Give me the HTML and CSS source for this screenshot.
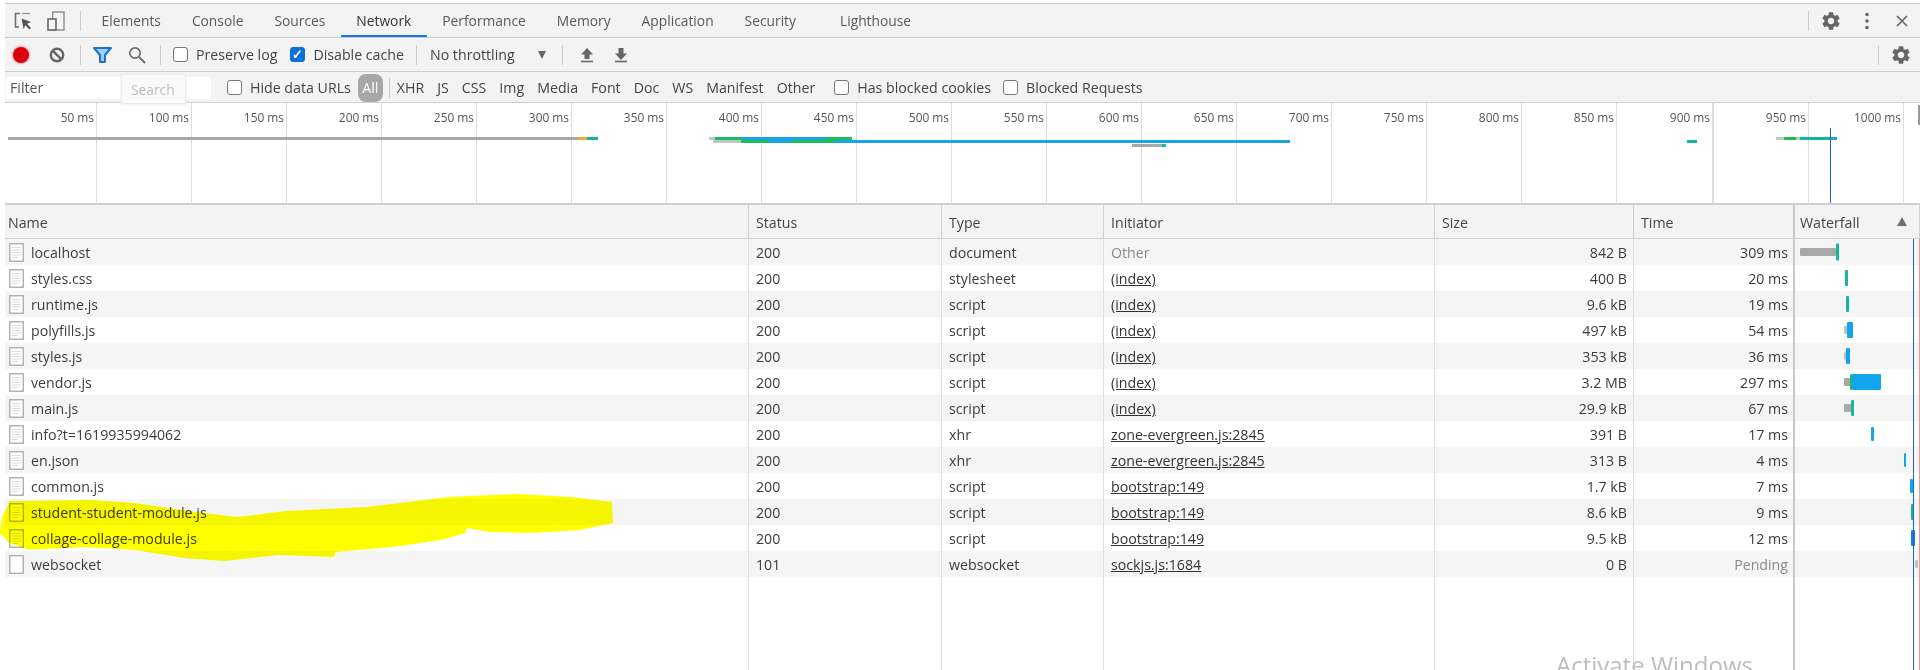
FILE: index.html
```html
<!DOCTYPE html>
<html lang="en">
<head>
<meta charset="utf-8">
<title>DevTools Network</title>
<link rel="stylesheet" href="styles.css">
</head>
<body>
<svg class="defs" width="0" height="0" aria-hidden="true">
  <symbol id="gear" viewBox="0 0 24 24"><path d="M19.14 12.94c.04-.3.06-.61.06-.94 0-.32-.02-.64-.07-.94l2.03-1.58a.49.49 0 0 0 .12-.61l-1.92-3.32a.488.488 0 0 0-.59-.22l-2.39.96c-.5-.38-1.03-.7-1.62-.94l-.36-2.54a.484.484 0 0 0-.48-.41h-3.84c-.24 0-.43.17-.47.41l-.36 2.54c-.59.24-1.13.57-1.62.94l-2.39-.96c-.22-.08-.47 0-.59.22L2.74 8.87c-.12.21-.08.47.12.61l2.03 1.58c-.05.3-.09.63-.09.94s.02.64.07.94l-2.03 1.58a.49.49 0 0 0-.12.61l1.92 3.32c.12.22.37.29.59.22l2.39-.96c.5.38 1.03.7 1.62.94l.36 2.54c.05.24.24.41.48.41h3.84c.24 0 .44-.17.47-.41l.36-2.54c.59-.24 1.13-.56 1.62-.94l2.39.96c.22.08.47 0 .59-.22l1.92-3.32c.12-.22.07-.47-.12-.61l-2.01-1.58zM12 15.6c-1.98 0-3.6-1.62-3.6-3.6s1.62-3.6 3.6-3.6 3.6 1.62 3.6 3.6-1.62 3.6-3.6 3.6z"/></symbol>
  <symbol id="doc" viewBox="0 0 15 19"><rect x=".75" y=".75" width="13.5" height="17.5" fill="#fff" stroke="#a9a9a9" stroke-width="1.3"/><path d="M3 4.5h9M3 7h9M3 9.5h9M3 12h9M3 14.5h6" stroke="#dcdcdc" stroke-width="1"/></symbol>
  <symbol id="blank" viewBox="0 0 15 19"><rect x=".75" y=".75" width="13.5" height="17.5" fill="#fff" stroke="#a9a9a9" stroke-width="1.3"/></symbol>
</svg>

<div class="devtools">
  <div class="bar tabbar">
    <svg class="ico inspect" viewBox="0 0 18 18"><path d="M6 1.5H1.5V15H5" fill="none" stroke="#6e6e6e" stroke-width="1.6"/><path d="M8 1.5h8" fill="none" stroke="#9a9a9a" stroke-width="1.4"/><path d="M7.5 6.5l9.5 3.6-4 1.6 4 4.2-1.6 1.6-4.1-4.2-1.7 4z" fill="#555"/></svg>
    <svg class="ico device" viewBox="0 0 18 20"><rect x="5.7" y="1" width="11.3" height="18" fill="none" stroke="#8c8c8c" stroke-width="1.4"/><rect x="1" y="8" width="8" height="11" fill="#f3f3f3" stroke="#666" stroke-width="1.6"/></svg>
    <span class="sep tabsep"></span>
    <nav class="tabs">
      <span class="tab">Elements</span>
      <span class="tab">Console</span>
      <span class="tab">Sources</span>
      <span class="tab active">Network</span>
      <span class="tab">Performance</span>
      <span class="tab">Memory</span>
      <span class="tab">Application</span>
      <span class="tab">Security</span>
      <span class="tab lighthouse">Lighthouse</span>
    </nav>
    <div class="bar-end">
      <span class="sep"></span>
      <svg class="gear tabgear"><use href="#gear"/></svg>
      <svg class="ico dots" viewBox="0 0 4 18"><circle cx="2" cy="2.5" r="1.8"/><circle cx="2" cy="9" r="1.8"/><circle cx="2" cy="15.5" r="1.8"/></svg>
      <svg class="ico close" viewBox="0 0 12 12"><path d="M1 1l10 10M11 1L1 11" stroke="#666" stroke-width="1.6" fill="none"/></svg>
    </div>
  </div>

  <div class="bar toolbar">
    <span class="record"></span>
    <svg class="ico clear" viewBox="0 0 16 16"><circle cx="8" cy="8" r="6.2" fill="none" stroke="#666" stroke-width="2.4"/><path d="M3.8 3.8l8.4 8.4" stroke="#666" stroke-width="2.4"/></svg>
    <span class="sep s1"></span>
    <svg class="ico funnel" viewBox="0 0 19 16"><path d="M1 1h17l-6 7v7H7V8z" fill="#9fd0f5" stroke="#1a73c8" stroke-width="2" stroke-linejoin="round"/></svg>
    <svg class="ico search" viewBox="0 0 18 18"><circle cx="7" cy="7" r="5.2" fill="none" stroke="#6e6e6e" stroke-width="1.7"/><path d="M11 11l6 6" stroke="#6e6e6e" stroke-width="2"/></svg>
    <span class="sep s2"></span>
    <span class="check"></span><span class="lbl">Preserve log</span>
    <span class="check on">✓</span><span class="lbl">Disable cache</span>
    <span class="sep s3"></span>
    <span class="lbl throttle">No throttling</span>
    <span class="tri"></span>
    <span class="sep s4"></span>
    <svg class="ico updown" viewBox="0 0 14 16"><path d="M7 1l6 6.5H9.5V12h-5V7.5H1z" fill="#666"/><path d="M1 14.5h12" stroke="#666" stroke-width="1.6"/></svg>
    <svg class="ico updown down" viewBox="0 0 14 16"><path d="M7 13l6-6.500H9.500V1h-5v5.500H1z" fill="#666"/><path d="M1 14.500h12" stroke="#666" stroke-width="1.600"/></svg>
    <div class="bar-end">
      <span class="sep"></span>
      <svg class="gear"><use href="#gear"/></svg>
    </div>
  </div>

  <div class="bar filterbar">
    <div class="filter-input">Filter</div>
    <span class="check hide-check"></span><span class="lbl">Hide data URLs</span>
    <span class="pill">All</span>
    <span class="sep s5"></span>
    <div class="types">
      <span>XHR</span><span>JS</span><span>CSS</span><span>Img</span><span>Media</span><span>Font</span><span>Doc</span><span>WS</span><span>Manifest</span><span>Other</span>
    </div>
    <span class="check blocked-check"></span><span class="lbl">Has blocked cookies</span>
    <span class="check blocked-check2"></span><span class="lbl">Blocked Requests</span>
  </div>

  <div class="overview">
    <div class="tick first">50 ms</div>
    <div class="tick">100 ms</div>
    <div class="tick">150 ms</div>
    <div class="tick">200 ms</div>
    <div class="tick">250 ms</div>
    <div class="tick">300 ms</div>
    <div class="tick">350 ms</div>
    <div class="tick">400 ms</div>
    <div class="tick">450 ms</div>
    <div class="tick">500 ms</div>
    <div class="tick">550 ms</div>
    <div class="tick">600 ms</div>
    <div class="tick">650 ms</div>
    <div class="tick">700 ms</div>
    <div class="tick">750 ms</div>
    <div class="tick">800 ms</div>
    <div class="tick">850 ms</div>
    <div class="tick wide">900 ms</div>
    <div class="tick">950 ms</div>
    <div class="tick">1000 ms</div>
    <span class="ov gray" style="left:3px;width:570px;top:34px"></span>
    <span class="ov orange" style="left:573px;width:9px;top:34px"></span>
    <span class="ov teal" style="left:582px;width:11px;top:34px"></span>
    <span class="ov pale" style="left:704px;width:6px;top:34px"></span>
    <span class="ov green" style="left:710px;width:27px;top:34px"></span>
    <span class="ov blue" style="left:737px;width:84px;top:34px"></span>
    <span class="ov green" style="left:821px;width:26px;top:34px"></span>
    <span class="ov pale" style="left:708px;width:28px;top:37px"></span>
    <span class="ov green" style="left:736px;width:28px;top:37px"></span>
    <span class="ov blue" style="left:764px;width:23px;top:37px"></span>
    <span class="ov green" style="left:787px;width:43px;top:37px"></span>
    <span class="ov blue" style="left:830px;width:455px;top:37px"></span>
    <span class="ov gray" style="left:1127px;width:30px;top:41px"></span>
    <span class="ov teal" style="left:1157px;width:4px;top:41px"></span>
    <span class="ov teal" style="left:1682px;width:10px;top:37px"></span>
    <span class="ov pale" style="left:1771px;width:8px;top:34px"></span>
    <span class="ov green" style="left:1779px;width:12px;top:34px"></span>
    <span class="ov pale" style="left:1791px;width:4px;top:34px"></span>
    <span class="ov teal" style="left:1795px;width:30px;top:34px"></span>
    <span class="ov blue" style="left:1825px;width:7px;top:34px"></span>
    <span class="ov-line"></span>
    <span class="ov-scroll"></span>
  </div>

  <div class="table">
    <div class="row head">
      <div class="cell">Name</div><div class="cell">Status</div><div class="cell">Type</div><div class="cell">Initiator</div><div class="cell">Size</div><div class="cell">Time</div>
      <div class="cell wf-head">Waterfall<span class="sort"></span></div>
    </div>

    <div class="row">
      <div class="cell name"><svg class="doc"><use href="#doc"/></svg>localhost</div><div class="cell">200</div><div class="cell">document</div><div class="cell muted">Other</div><div class="cell num">842 B</div><div class="cell num">309 ms</div>
      <div class="cell wf"><i class="wb gray" style="left:5px;width:36px;height:8px"></i><i class="wb teal" style="left:41px;width:3px;height:17px"></i></div>
    </div>
    <div class="row">
      <div class="cell name"><svg class="doc"><use href="#doc"/></svg>styles.css</div><div class="cell">200</div><div class="cell">stylesheet</div><div class="cell"><u>(index)</u></div><div class="cell num">400 B</div><div class="cell num">20 ms</div>
      <div class="cell wf"><i class="wb teal" style="left:50px;width:3px;height:16px"></i></div>
    </div>
    <div class="row">
      <div class="cell name"><svg class="doc"><use href="#doc"/></svg>runtime.js</div><div class="cell">200</div><div class="cell">script</div><div class="cell"><u>(index)</u></div><div class="cell num">9.6 kB</div><div class="cell num">19 ms</div>
      <div class="cell wf"><i class="wb teal" style="left:51px;width:3px;height:16px"></i></div>
    </div>
    <div class="row">
      <div class="cell name"><svg class="doc"><use href="#doc"/></svg>polyfills.js</div><div class="cell">200</div><div class="cell">script</div><div class="cell"><u>(index)</u></div><div class="cell num">497 kB</div><div class="cell num">54 ms</div>
      <div class="cell wf"><i class="wb pale" style="left:49px;width:3px;height:8px"></i><i class="wb blue" style="left:52px;width:6px;height:16px"></i></div>
    </div>
    <div class="row">
      <div class="cell name"><svg class="doc"><use href="#doc"/></svg>styles.js</div><div class="cell">200</div><div class="cell">script</div><div class="cell"><u>(index)</u></div><div class="cell num">353 kB</div><div class="cell num">36 ms</div>
      <div class="cell wf"><i class="wb pale" style="left:49px;width:2px;height:8px"></i><i class="wb blue" style="left:51px;width:4px;height:16px"></i></div>
    </div>
    <div class="row">
      <div class="cell name"><svg class="doc"><use href="#doc"/></svg>vendor.js</div><div class="cell">200</div><div class="cell">script</div><div class="cell"><u>(index)</u></div><div class="cell num">3.2 MB</div><div class="cell num">297 ms</div>
      <div class="cell wf"><i class="wb gray" style="left:49px;width:6px;height:8px"></i><i class="wb green" style="left:55px;width:2px;height:16px"></i><i class="wb blue" style="left:57px;width:29px;height:16px"></i></div>
    </div>
    <div class="row">
      <div class="cell name"><svg class="doc"><use href="#doc"/></svg>main.js</div><div class="cell">200</div><div class="cell">script</div><div class="cell"><u>(index)</u></div><div class="cell num">29.9 kB</div><div class="cell num">67 ms</div>
      <div class="cell wf"><i class="wb gray" style="left:49px;width:7px;height:8px"></i><i class="wb teal" style="left:56px;width:3px;height:16px"></i></div>
    </div>
    <div class="row">
      <div class="cell name"><svg class="doc"><use href="#doc"/></svg>info?t=1619935994062</div><div class="cell">200</div><div class="cell">xhr</div><div class="cell"><u>zone-evergreen.js:2845</u></div><div class="cell num">391 B</div><div class="cell num">17 ms</div>
      <div class="cell wf"><i class="wb blue" style="left:76px;width:3px;height:14px"></i></div>
    </div>
    <div class="row">
      <div class="cell name"><svg class="doc"><use href="#doc"/></svg>en.json</div><div class="cell">200</div><div class="cell">xhr</div><div class="cell"><u>zone-evergreen.js:2845</u></div><div class="cell num">313 B</div><div class="cell num">4 ms</div>
      <div class="cell wf"><i class="wb blue" style="left:109px;width:2px;height:14px"></i></div>
    </div>
    <div class="row">
      <div class="cell name"><svg class="doc"><use href="#doc"/></svg>common.js</div><div class="cell">200</div><div class="cell">script</div><div class="cell"><u>bootstrap:149</u></div><div class="cell num">1.7 kB</div><div class="cell num">7 ms</div>
      <div class="cell wf"><i class="wb blue" style="left:115px;width:3px;height:14px"></i></div>
    </div>
    <div class="row">
      <div class="cell name"><svg class="doc"><use href="#doc"/></svg>student-student-module.js</div><div class="cell">200</div><div class="cell">script</div><div class="cell"><u>bootstrap:149</u></div><div class="cell num">8.6 kB</div><div class="cell num">9 ms</div>
      <div class="cell wf"><i class="wb teal" style="left:116px;width:3px;height:16px"></i></div>
    </div>
    <div class="row">
      <div class="cell name"><svg class="doc"><use href="#doc"/></svg>collage-collage-module.js</div><div class="cell">200</div><div class="cell">script</div><div class="cell"><u>bootstrap:149</u></div><div class="cell num">9.5 kB</div><div class="cell num">12 ms</div>
      <div class="cell wf"><i class="wb dblue" style="left:116px;width:4px;height:16px"></i></div>
    </div>
    <div class="row">
      <div class="cell name"><svg class="doc"><use href="#blank"/></svg>websocket</div><div class="cell">101</div><div class="cell">websocket</div><div class="cell"><u>sockjs.js:1684</u></div><div class="cell num">0 B</div><div class="cell num muted">Pending</div>
      <div class="cell wf"><i class="wb pale" style="left:120px;width:3px;height:8px"></i></div>
    </div>

    <div class="row filler">
      <div class="cell"></div><div class="cell"></div><div class="cell"></div><div class="cell"></div><div class="cell"></div><div class="cell"></div><div class="cell"></div>
    </div>
    <span class="wf-line blue-line"></span>
    <span class="wf-line red-line"></span>
  </div>
</div>

<div class="search-pop">Search</div>
<svg class="marker" viewBox="0 0 1920 670" aria-hidden="true">
  <path d="M9 501 L90 500 L135 503 L188 511 L237 517 L286 511 L367 507 L449 497 L518 494 L571 497 L612 502 L613 523 L580 530 L531 533 L490 532 L467 528 L465 533 L441 540 L392 547 L335 552 L334 557 L278 555 L224 561 L184 558 L135 550 L82 547 L29 550 L8 542 L0 533 L2 517 L9 503 Z"/>
</svg>
<div class="watermark">Activate Windows</div>
</body>
</html>
```

FILE: styles.css
```css
* { box-sizing: border-box; }
html, body { margin: 0; height: 670px; overflow: hidden; background: #fff; }
body { font-family: "Open Sans", "Noto Sans", sans-serif; font-size: 14.200px; color: #333; position: relative; }
.defs { position: absolute; }

.devtools { padding: 3px 0 0 5px; height: 670px; display: flex; flex-direction: column; }

.bar { display: flex; align-items: center; background: #f3f3f3; flex: none; border-top: 1px solid #cdcdcd; }
.tabbar { height: 34px; color: #5a5a5a; }
.toolbar { height: 34px; }
.filterbar { height: 31px; padding-top: 1px; }
.bar-end { margin-left: auto; display: flex; align-items: center; }

.sep { width: 1px; height: 20px; background: #ccc; flex: none; }
.ico { flex: none; display: block; }

.inspect { width: 18px; height: 18px; margin-left: 9px; }
.device { width: 18px; height: 20px; margin-left: 15px; }
.tabsep { margin-left: 15px; }
.tabs { display: flex; align-self: stretch; margin-left: 5px; font-size: 13.800px; }
.tab { padding: 0 15.500px; display: flex; align-items: center; height: 33px; position: relative; }
.tab.active { color: #333; }
.tab.active::after { content: ""; position: absolute; left: 0; right: 0; bottom: 0; height: 2px; background: #1a73e8; }
.lighthouse { margin-left: 13px; }

.gear { width: 22px; height: 22px; fill: #666; display: block; margin-left: 11px; }
.dots { width: 4px; height: 18px; fill: #666; margin-left: 23px; }
.close { width: 12px; height: 12px; margin-left: 27px; margin-right: 12px; }
.toolbar .gear { margin-right: 8px; }

.record { width: 16px; height: 16px; border-radius: 50%; background: #d9000b; box-shadow: 0 0 2px 1px #f2a0a0; margin-left: 8px; flex: none; }
.clear { width: 16px; height: 16px; margin-left: 20px; }
.s1 { margin-left: 15px; }
.funnel { width: 19px; height: 16px; margin-left: 12px; }
.search { width: 18px; height: 18px; margin-left: 16px; }
.s2 { margin-left: 14px; }

.check { width: 15px; height: 15px; border: 1px solid #767676; border-radius: 3px; background: #fff; flex: none; display: flex; align-items: center; justify-content: center; }
.check.on { background: #0a6fd8; border-color: #0a6fd8; color: #fff; font-size: 13px; font-weight: 700; line-height: 1; margin-left: 13px; }
.toolbar .check:not(.on) { margin-left: 12px; }
.lbl { color: #444; flex: none; margin-left: 8px; }
.lbl.throttle { margin-left: 13px; }
.s3 { margin-left: 12px; }
.tri { width: 0; height: 0; border-left: 4px solid transparent; border-right: 4px solid transparent; border-top: 8px solid #666; margin-left: 23px; flex: none; }
.s4 { margin-left: 16px; }
.updown { width: 14px; height: 16px; margin-left: 17px; }
.updown.down { margin-left: 20px; }

.filter-input { width: 205px; height: 22px; background: #fff; padding-left: 4px; line-height: 22px; color: #555; margin-left: 1px; flex: none; }
.hide-check { margin-left: 16px; }
.pill { width: 25px; height: 28px; border-radius: 8px; background: #a8a8a8; color: #fff; display: flex; align-items: center; justify-content: center; margin-left: 7px; flex: none; }
.s5 { margin-left: 6px; }
.types { display: flex; gap: 13px; margin-left: 7px; color: #444; flex: none; }
.blocked-check { margin-left: 19px; }
.blocked-check2 { margin-left: 12px; }

.search-pop { position: absolute; left: 121px; top: 74px; width: 65px; height: 30px; background: #fafafa; border: 1px solid #ececec; box-shadow: 0 1px 2px #eee; color: #bdbdbd; line-height: 30px; padding-left: 9px; font-size: 13.800px; }

.overview { position: relative; display: flex; height: 101px; flex: none; border-top: 1px solid #d0d0d0; }
.tick { width: 95px; flex: none; border-right: 1px solid #dcdcdc; text-align: right; padding: 6px 2px 0 0; font-size: 11.900px; color: #555; }
.tick.first { width: 92px; }
.tick.wide { width: 97px; border-right-width: 2px; }
.ov { position: absolute; height: 3px; }
.ov.gray { background: #a8a8a8; }
.ov.pale { background: #c4c4c4; }
.ov.orange { background: #f0a93c; }
.ov.teal { background: #13b5a0; }
.ov.green { background: #19bd5c; }
.ov.blue { background: #19a4e4; }
.ov-line { position: absolute; left: 1825px; top: 25px; bottom: 0; width: 1px; background: #1967c2; }
.ov-scroll { position: absolute; right: 0; top: 2px; width: 2px; height: 20px; background: #999; }

.table { position: relative; flex: 1; min-height: 0; display: flex; flex-direction: column; border-top: 2px solid #d0d0d0; }
.row { display: grid; grid-template-columns: 744px 193px 162px 331px 199px 161px 125px; height: 26px; flex: none; background: #fff; color: #3c3c3c; }
.row:nth-child(even) { background: #f5f5f5; }
.row.head { height: 34px; background: #f3f3f3; border-bottom: 1px solid #d0d0d0; }
.row.filler { flex: 1; background: #fff; }
.cell { border-right: 1px solid #e0e0e0; padding: 0 6px 0 7px; display: flex; align-items: center; white-space: nowrap; min-width: 0; }
.cell u { color: #333; }
.head .cell { border-right-color: #d0d0d0; color: #444; padding-top: 2px; }
.cell:first-child { padding-left: 4px; }
.head .cell:first-child { padding-left: 3px; }
.cell.name { gap: 7px; }
.doc { width: 15px; height: 19px; flex: none; }
.num { justify-content: flex-end; }
.cell.num:nth-child(6) { padding-right: 5px; }
.muted { color: #8a8a8a; }
.cell:nth-child(6) { border-right: 2px solid #c8c8c8; }
.wf-head { position: relative; padding-left: 5px; }
.sort { position: absolute; left: 102px; top: 12px; width: 0; height: 0; border-left: 5px solid transparent; border-right: 5px solid transparent; border-bottom: 9px solid #707070; }
.cell.wf { position: relative; border: 0; padding: 0; }
.wb { position: absolute; top: 50%; transform: translateY(-50%); border-radius: 1px; }
.wb.gray { background: #a8a8a8; }
.wb.pale { background: #c0c0c0; }
.wb.teal { background: #13b89c; }
.wb.green { background: #19bd5c; }
.wb.blue { background: #12a5ee; }
.wb.dblue { background: #0f84d8; }
.wf-line { position: absolute; top: 34px; bottom: 0; width: 1px; }
.blue-line { left: 1908px; background: #1967c2; }
.red-line { left: 1914px; background: #e39a9a; }

.marker { position: absolute; left: 0; top: 0; width: 1920px; height: 670px; mix-blend-mode: multiply; pointer-events: none; }
.marker path { fill: #ffff00; }

.watermark { position: absolute; left: 1556px; top: 647px; font-size: 24px; line-height: 36px; color: #bdbdbd; white-space: nowrap; }
```
